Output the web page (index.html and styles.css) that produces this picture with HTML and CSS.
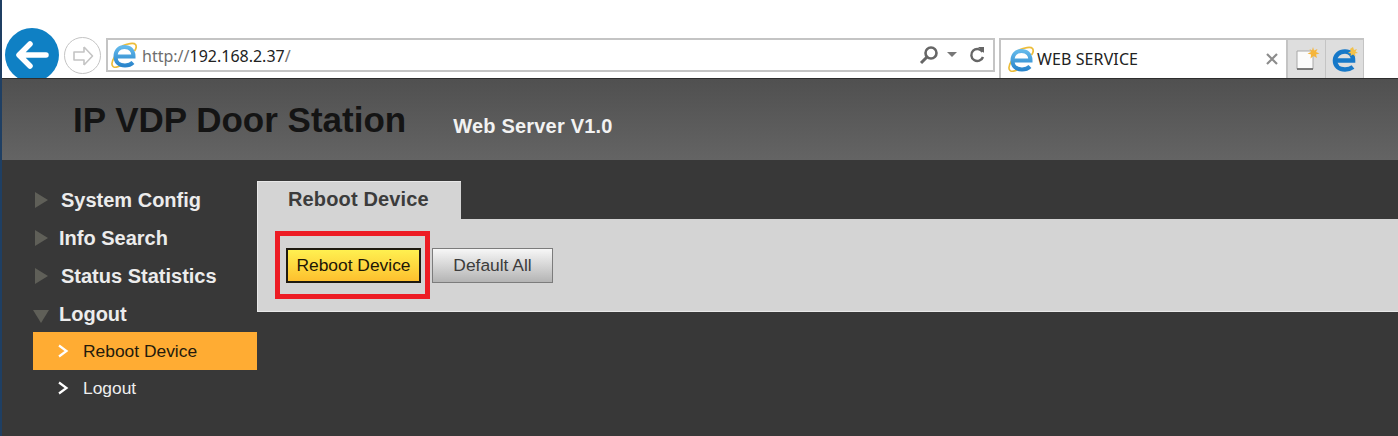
FILE: index.html
```html
<!DOCTYPE html>
<html lang="en">
<head>
    <meta charset="UTF-8">
    <title>WEB SERVICE</title>
    <link rel="stylesheet" href="styles.css">
</head>
<body>

<svg class="defs" width="0" height="0">
    <defs>
        <linearGradient id="ie-blue" x1="0" y1="0" x2="0" y2="1">
            <stop offset="0" stop-color="#62b8ea"/>
            <stop offset="1" stop-color="#2b86cc"/>
        </linearGradient>
    </defs>
    <symbol id="ie" viewBox="0 0 26 26">
        <path d="M11 4 C16 1.500 23 0.500 24.500 2.500 C25.500 4 25 7 23.500 9 M3.500 15 C1 19 0.500 23 2 24.500 C3.500 26 7 25 10 23.500" fill="none" stroke="#ecbd3a" stroke-width="1.700"/>
        <path d="M4.500 14.500 H22.500 C22.500 8 18.500 5 13.500 5 C8 5 4.500 9 4.500 14.500 C4.500 20 8 23.500 14 23.500 C17.500 23.500 20 22.500 22 20.500" fill="none" stroke="url(#ie-blue)" stroke-width="4"/>
    </symbol>
</svg>

<div class="chrome">
    <div class="nav-back">
        <svg width="34" height="28" viewBox="0 0 34 28"><path d="M15 3 L4 14 L15 25 M5 14 L31 14" fill="none" stroke="#fff" stroke-width="5.500" stroke-linecap="round" stroke-linejoin="round"/></svg>
    </div>
    <div class="nav-forward">
        <svg width="22" height="22" viewBox="0 0 22 22"><path d="M12 2 L20.500 11 L12 20 M12 2 L12 7 L2 7 L2 15 L12 15 L12 20" fill="none" stroke="#c4c4c4" stroke-width="1.600" stroke-linejoin="round"/></svg>
    </div>
    <div class="address">
        <svg class="ie-icon" width="26" height="26"><use href="#ie"/></svg>
        <span class="url">http://<b>192.168.2.37</b>/</span>
        <div class="address-tools">
            <svg class="tool-search" width="20" height="20" viewBox="0 0 20 20"><circle cx="12" cy="8" r="5.500" fill="none" stroke="#666" stroke-width="2.600"/><path d="M8 12 L2 18" stroke="#666" stroke-width="3"/></svg>
            <svg class="tool-drop" width="10" height="6" viewBox="0 0 10 6"><path d="M0 0 L10 0 L5 5Z" fill="#777"/></svg>
            <svg width="16" height="18" viewBox="0 0 16 18"><path d="M13.500 6 A6 6 0 1 0 14 11" fill="none" stroke="#666" stroke-width="2.400"/><path d="M9 1 L15 1 L15 7Z" fill="#666"/></svg>
        </div>
    </div>
    <div class="tab-strip">
        <div class="browser-tab">
            <svg class="ie-icon" width="26" height="26"><use href="#ie"/></svg>
            <span class="tab-title">WEB SERVICE</span>
            <svg class="tab-close" width="12" height="12" viewBox="0 0 12 12"><path d="M1 1 L11 11 M11 1 L1 11" stroke="#8c8c8c" stroke-width="2.200"/></svg>
        </div>
        <div class="strip-btn">
            <svg width="28" height="28" viewBox="0 0 28 28"><path d="M4 6 H20 V24 H4Z" fill="#fbfbfb" stroke="#a8a8a8"/><path d="M4 24 H20" stroke="#666" stroke-width="1.600"/><path d="M20 2 L21 5.500 L24.500 4 L23 7 L26.500 8.500 L23 9.500 L24 13 L20.500 11 L17.500 13.500 L18 9.500 L14.500 8.500 L18 7 L16.500 4 L19 5.500Z" fill="#f5b53a"/></svg>
        </div>
        <div class="strip-btn">
            <svg width="28" height="28" viewBox="0 0 28 28"><path d="M4 15.500 H22 C22 9.500 19 6.500 14 6.500 C8 6.500 4 10.500 4 15.500 C4 21 8 24.500 14 24.500 C17.500 24.500 20 23.500 22 22" fill="none" stroke="#1678c8" stroke-width="4.600"/><path d="M22 2 L23 5 L26 4 L24.500 6.500 L27 8 L24 8.500 L24.500 11.500 L22 9.500 L19.500 11 L20 8.500 L17 8 L20 6 L19 4Z" fill="#f2c14a"/></svg>
        </div>
    </div>
</div>

<div class="page">
    <div class="top-bar">
        <h1>IP VDP Door Station</h1>
        <span class="version">Web Server V1.0</span>
    </div>
    <div class="content">
        <div class="sidebar">
            <div class="menu-head"><i class="arrow-right"></i><span class="s1">System Config</span></div>
            <div class="menu-head"><i class="arrow-right"></i><span>Info Search</span></div>
            <div class="menu-head"><i class="arrow-right"></i><span class="s1">Status Statistics</span></div>
            <div class="menu-head"><i class="arrow-down"></i><span>Logout</span></div>
            <div class="menu-item active">
                <svg width="12" height="14" viewBox="0 0 12 14"><path d="M2 1.500 L9.500 7 L2 12.500" fill="none" stroke="#fff" stroke-width="2.200"/></svg>
                <span>Reboot Device</span>
            </div>
            <div class="menu-item">
                <svg width="12" height="14" viewBox="0 0 12 14"><path d="M2 1.500 L9.500 7 L2 12.500" fill="none" stroke="#fff" stroke-width="2.200"/></svg>
                <span>Logout</span>
            </div>
        </div>
        <div class="main">
            <div class="main-tab">Reboot Device</div>
            <div class="panel">
                <div class="highlight">
                    <button class="btn btn-yellow">Reboot Device</button>
                </div>
                <button class="btn btn-grey">Default All</button>
            </div>
        </div>
    </div>
</div>

</body>
</html>
```

FILE: styles.css
```css
html, body {
    margin: 0;
    height: 100%;
}
body {
    width: 1398px;
    height: 436px;
    overflow: hidden;
    background-color: #383838;
    font-family: "Liberation Sans", Arial, sans-serif;
    border-left: 2px solid #1f3f63;
    box-sizing: border-box;
}
.defs {
    display: block;
    height: 0;
}
.chrome {
    height: 78px;
    background-color: #fff;
    display: flex;
    align-items: flex-start;
    padding-top: 28px;
    box-sizing: border-box;
    overflow: hidden;
}
.nav-back {
    width: 54px;
    height: 54px;
    margin-left: 3px;
    flex: none;
    border-radius: 50%;
    background-color: #0f80c4;
    display: flex;
    justify-content: center;
    padding-top: 13px;
    box-sizing: border-box;
}
.nav-forward {
    width: 37px;
    height: 37px;
    margin: 9px 0 0 5px;
    flex: none;
    border: 1px solid #c4c4c4;
    border-radius: 50%;
    display: flex;
    align-items: center;
    justify-content: center;
    box-sizing: border-box;
}
.address {
    width: 889px;
    height: 34px;
    margin: 10px 0 0 5px;
    flex: none;
    border: 2px solid #c4c4c4;
    box-sizing: border-box;
    display: flex;
    align-items: center;
    padding: 0 8px 0 3px;
}
.ie-icon {
    flex: none;
}
.url {
    margin: 2px 0 0 5px;
    font-family: "Noto Sans", sans-serif;
    font-size: 16px;
    color: #6e6e6e;
}
.url b {
    font-weight: normal;
    color: #222;
}
.address-tools {
    margin-left: auto;
    display: flex;
    align-items: center;
}
.tool-search {
    margin-right: 8px;
}
.tool-drop {
    margin-right: 12px;
}
.tab-strip {
    margin: 10px 0 0 4px;
    display: flex;
    height: 40px;
}
.browser-tab {
    width: 289px;
    border: 2px solid #c4c4c4;
    border-bottom: none;
    box-sizing: border-box;
    display: flex;
    align-items: center;
    padding: 0 8px 0 7px;
}
.tab-title {
    margin-left: 3px;
    font-family: "Noto Sans", sans-serif;
    font-size: 16px;
    letter-spacing: 0.1px;
    color: #222;
}
.tab-close {
    margin-left: auto;
}
.strip-btn {
    width: 38px;
    background-color: #dedede;
    border: 1px solid #c4c4c4;
    border-width: 2px 1px 0 0;
    box-sizing: border-box;
    display: flex;
    align-items: center;
    justify-content: center;
}
.page {
    border-top: 1px solid #2e2e2e;
}
.top-bar {
    height: 81px;
    background: linear-gradient(to bottom, #505050, #646464);
    display: flex;
    align-items: flex-start;
    box-sizing: border-box;
    padding: 21px 0 0 71px;
}
.top-bar h1 {
    margin: 0;
    font-size: 35px;
    font-weight: bold;
    color: #141414;
}
.version {
    margin: 15px 0 0 47px;
    font-size: 20px;
    font-weight: bold;
    letter-spacing: 0.2px;
    color: #f2f2f2;
}
.content {
    display: flex;
    padding: 21px 0 0 31px;
}
.sidebar {
    width: 224px;
    flex: none;
}
.menu-head {
    height: 38px;
    display: flex;
    align-items: center;
    font-size: 20px;
    font-weight: bold;
    color: #ececec;
}
.arrow-right {
    width: 0;
    height: 0;
    margin: 0 11px 0 2px;
    border-left: 13px solid #5f5f58;
    border-top: 8px solid transparent;
    border-bottom: 8px solid transparent;
}
.menu-head .s1 {
    margin-left: 2px;
}
.arrow-down {
    width: 0;
    height: 0;
    margin: 4px 10px 0 0;
    border-top: 13px solid #5f5f58;
    border-left: 8.500px solid transparent;
    border-right: 8.500px solid transparent;
}
.menu-item {
    height: 36px;
    display: flex;
    align-items: center;
    gap: 14px;
    padding-left: 24px;
    font-size: 17.400px;
    color: #efefef;
}
.menu-item.active {
    height: 38px;
    margin-top: -1px;
    background-color: #ffac33;
    color: #231a0c;
}
.main {
    flex: 1;
}
.main-tab {
    width: 204px;
    height: 38px;
    background-color: #d4d4d4;
    box-shadow: inset 1px 1px #e8e8e8;
    box-sizing: border-box;
    padding: 7px 0 0 31px;
    font-size: 20px;
    font-weight: bold;
    letter-spacing: 0.15px;
    color: #3c3c3c;
}
.panel {
    height: 93px;
    background-color: #d4d4d4;
    box-shadow: inset 1px -1px #e8e8e8;
    box-sizing: border-box;
    padding: 12px 0 0 18px;
    display: flex;
    align-items: flex-start;
}
.highlight {
    width: 155px;
    height: 68px;
    border: 5px solid #ed1c24;
    box-sizing: border-box;
    padding: 12px 0 0 6px;
}
.btn {
    height: 35px;
    box-sizing: border-box;
    font-family: "Liberation Sans", Arial, sans-serif;
    font-size: 17.400px;
    padding: 0;
}
.btn-yellow {
    width: 135px;
    border: 2px solid #1e1a10;
    background: linear-gradient(to bottom, #fff050, #fdc02e);
    color: #1c1606;
}
.btn-grey {
    width: 121px;
    margin: 17px 0 0 2px;
    border: 1px solid #7c7c7c;
    background: linear-gradient(to bottom, #f7f7f7, #b4b4b4);
    color: #3c3c3c;
}
```
